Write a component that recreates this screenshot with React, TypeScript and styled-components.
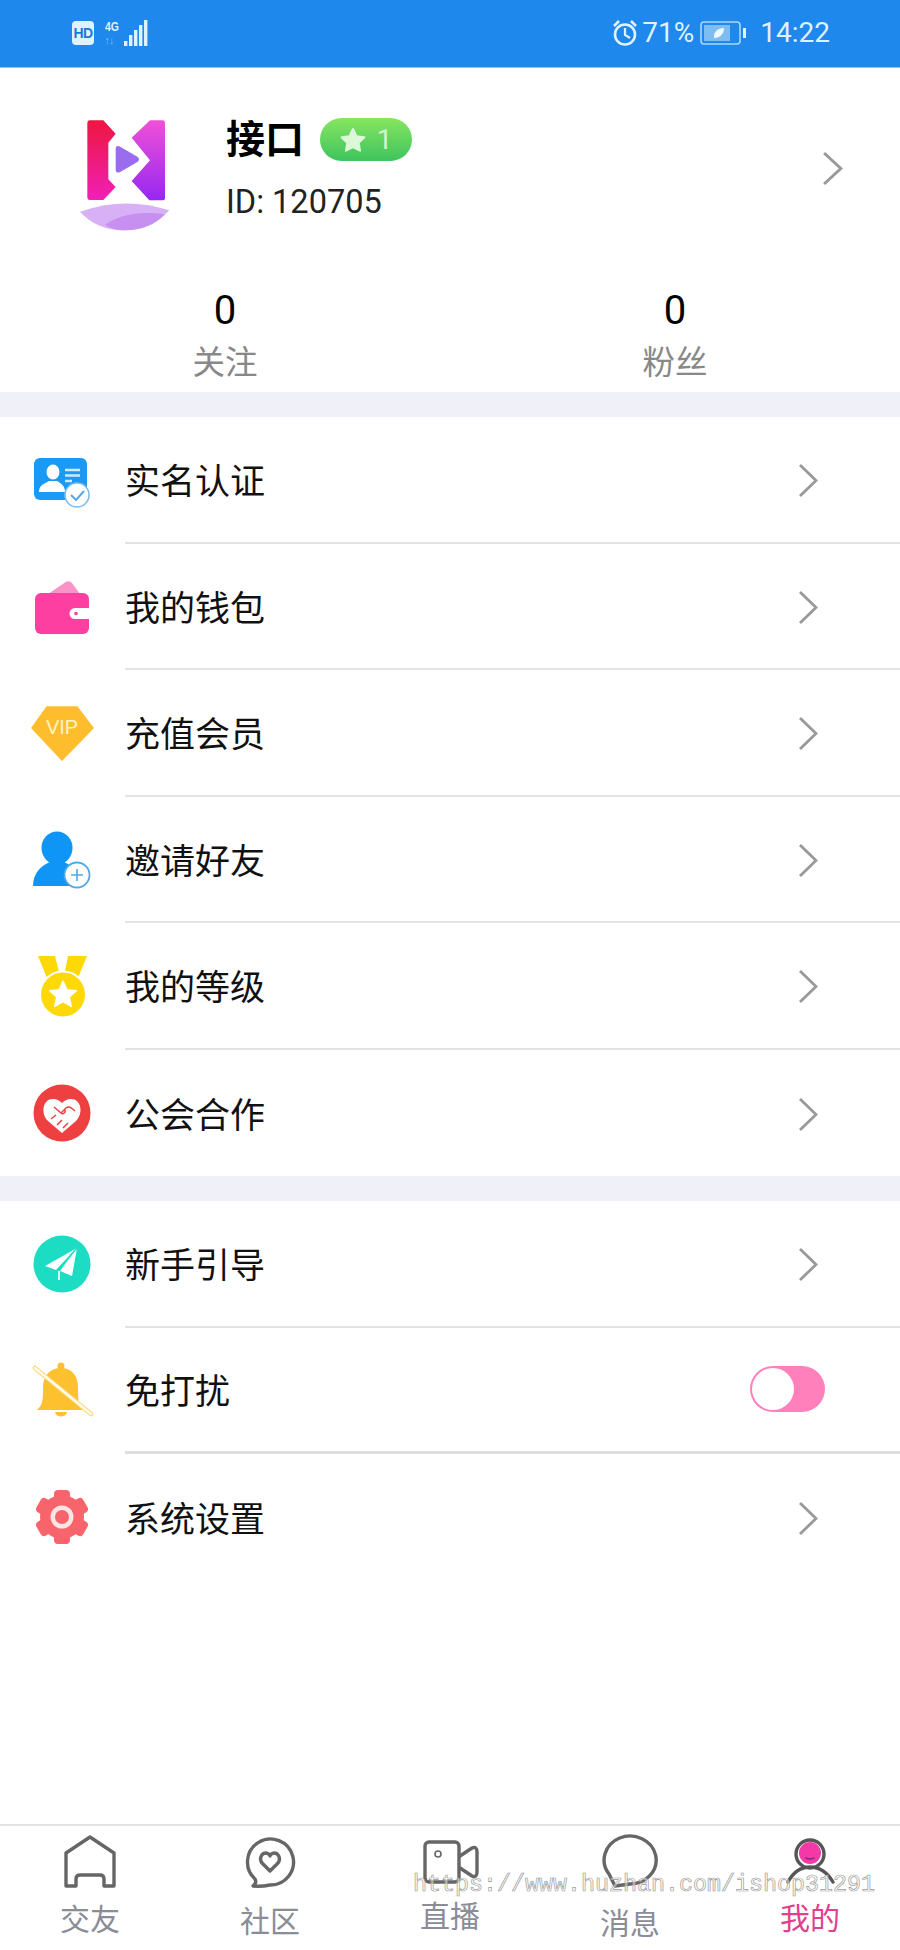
import React from "react";
import styled, { createGlobalStyle } from "styled-components";

const CJK = `Roboto, "Noto Sans CJK SC", "Noto Sans", sans-serif`;

const Global = createGlobalStyle`
  html, body { margin: 0; padding: 0; background: #fff; }
  * { box-sizing: border-box; }
`;

const Page = styled.div`
  position: relative;
  width: 900px;
  min-height: 1950px;
  display: flex;
  flex-direction: column;
  background: #fff;
  font-family: ${CJK};
`;

/* status bar */
const StatusBar = styled.header`
  height: 68px;
  padding: 0 70px 2px 72px;
  background: #1e88ed;
  border-bottom: 1px solid #8cc6f6;
  display: flex;
  align-items: center;
  justify-content: space-between;
  color: #dff2ff;
`;
const StatusGroup = styled.div`
  display: flex;
  align-items: center;
`;
const HdBadge = styled.span`
  width: 22px;
  height: 24px;
  border-radius: 4px;
  background: #dff2ff;
  color: #1e78d8;
  font: 700 14px/24px "Liberation Sans", sans-serif;
  letter-spacing: -0.5px;
  text-align: center;
`;
const NetStack = styled.div`
  margin-left: 11px;
  width: 16px;
  display: flex;
  flex-direction: column;
  gap: 2px;
`;
const NetLabel = styled.span`
  font: 700 13px/12px "Liberation Sans", sans-serif;
  transform: scaleX(0.8);
  transform-origin: left;
`;
const NetArrows = styled.span`
  font: 700 11px/10px "Liberation Sans", sans-serif;
  color: #8cc8f8;
  transform: scaleX(0.8);
  transform-origin: left;
`;
const StatusText = styled.span<{ $gap?: number }>`
  font-size: 28px;
  line-height: 32px;
  margin-left: ${(p) => p.$gap ?? 0}px;
`;
const Battery = styled.svg`
  margin-left: 6px;
`;
const SignalBars = styled.svg`
  margin-left: 3px;
`;

/* profile */
const Profile = styled.section`
  height: 213px;
  padding: 0 57px 0 79px;
  display: flex;
  align-items: center;
`;
const ProfileInfo = styled.div`
  margin: 0 0 11px 55px;
  flex: 1;
  display: flex;
  flex-direction: column;
  gap: 20px;
`;
const NameRow = styled.div`
  display: flex;
  align-items: center;
  gap: 16px;
`;
const Name = styled.span`
  font-size: 39px;
  line-height: 46px;
  font-weight: 700;
  color: #000;
`;
const LevelBadge = styled.span`
  width: 92px;
  height: 43px;
  border-radius: 22px;
  background: linear-gradient(to bottom, #86e660, #3ec45e);
  display: flex;
  align-items: center;
  justify-content: center;
  gap: 11px;
  color: #d4f6cc;
  font-size: 28px;
`;
const UserId = styled.span`
  font-size: 32.5px;
  line-height: 39px;
  color: #222;
`;
const ProfileChevron = styled.span`
  display: flex;
  margin-bottom: 13px;
`;

/* stats */
const Stats = styled.section`
  height: 111px;
  padding-top: 8px;
  display: grid;
  grid-template-columns: 1fr 1fr;
`;
const Stat = styled.div`
  display: flex;
  flex-direction: column;
  align-items: center;
  gap: 10px;
`;
const StatValue = styled.span`
  font-size: 40px;
  line-height: 44px;
  color: #000;
`;
const StatLabel = styled.span`
  font-size: 32.5px;
  line-height: 40px;
  color: #888;
`;

/* menu */
const Band = styled.div`
  height: 25px;
  background: #f0f0f8;
`;
const Row = styled.div`
  height: 126.5px;
  display: flex;
`;
const IconSlot = styled.span`
  width: 125px;
  padding-left: 30px;
  display: flex;
  align-items: center;
  flex: none;
`;
const RowBody = styled.div<{ $last?: boolean; $thick?: boolean }>`
  flex: 1;
  padding-right: 82px;
  display: flex;
  align-items: center;
  justify-content: space-between;
  border-bottom: ${(p) =>
    p.$last ? "none" : `${p.$thick ? 3 : 2}px solid ${p.$thick ? "#dedede" : "#e4e4e4"}`};
`;
const RowLabel = styled.span`
  margin-top: 8px;
  font-size: 35px;
  line-height: 44px;
  color: #111;
`;
const RowChevron = styled.span`
  margin-top: 3px;
  display: flex;
`;
const Switch = styled.span`
  width: 75px;
  height: 46px;
  margin-right: -7px;
  padding: 2px;
  border-radius: 23px;
  background: #ff80bb;
  display: flex;
`;
const SwitchThumb = styled.span`
  width: 42px;
  height: 42px;
  border-radius: 50%;
  background: #fff;
`;
const Spacer = styled.div`
  flex: 1;
`;

/* bottom nav */
const Nav = styled.nav`
  position: relative;
  height: 126px;
  padding-top: 6px;
  border-top: 2px solid #e4e4e4;
  display: grid;
  grid-template-columns: repeat(5, 180px);
`;
const NavItem = styled.div`
  display: flex;
  flex-direction: column;
  align-items: center;
`;
const NavLabel = styled.span<{ $active?: boolean; $offset: number }>`
  margin-top: ${(p) => p.$offset}px;
  font-size: 30px;
  line-height: 36px;
  color: ${(p) => (p.$active ? "#e0408c" : "#8a8c96")};
`;
const Watermark = styled.span`
  position: absolute;
  left: 413px;
  top: 46px;
  font: 400 23.33px/26px "Liberation Mono", monospace;
  color: rgba(255, 255, 255, 0.55);
  -webkit-text-stroke: 0.7px #9c9c9c;
  white-space: nowrap;
`;

const Chevron = ({ w = 20, h = 35 }: { w?: number; h?: number }) => (
  <svg width={w} height={h} viewBox="0 0 20 35" fill="none" preserveAspectRatio="none">
    <path d="M2 2 L18 17.5 L2 33" stroke="#999" strokeWidth="2.8" />
  </svg>
);

const Icon = ({ children }: { children: React.ReactNode }) => (
  <svg width="64" height="64" viewBox="0 0 64 64">
    {children}
  </svg>
);

const star = (cx: number, cy: number, R: number, r: number) =>
  Array.from({ length: 10 }, (_, i) => {
    const a = -Math.PI / 2 + (i * Math.PI) / 5;
    const d = i % 2 ? r : R;
    return `${(cx + d * Math.cos(a)).toFixed(2)},${(cy + d * Math.sin(a)).toFixed(2)}`;
  }).join(" ");

const CardIcon = () => (
  <Icon>
    <rect x="4" y="10" width="53" height="42" rx="6" fill="#1a9af5" />
    <ellipse cx="23" cy="24" rx="6.5" ry="7.5" fill="#fff" />
    <path d="M9 44 C9 37 14 36 19 33 L27 33 C32 36 35 38 35 44 Z" fill="#fff" />
    <path d="M35 22 H50 M35 27.5 H50 M35 33 H42" stroke="#cfeaff" strokeWidth="2.4" />
    <circle cx="47" cy="47" r="12" fill="#fff" stroke="#7dbdec" strokeWidth="1.6" />
    <path d="M41 47 L46 52 L54 43" fill="none" stroke="#5aa8e4" strokeWidth="2" />
  </Icon>
);
const WalletIcon = () => (
  <Icon>
    <path d="M18 19 L35 7.5 Q39 5 42 8 L50 19 Z" fill="#fb94c6" />
    <rect x="5" y="18" width="54" height="41" rx="6" fill="#fd3fa2" />
    <path d="M60 33 H45 A5.5 5.5 0 0 0 45 44 H60 Z" fill="#fff" />
    <circle cx="46" cy="38.5" r="1.8" fill="#fd3fa2" />
  </Icon>
);
const VipIcon = () => (
  <Icon>
    <path d="M17 6 H47 L63 27 L32 59 L2 27 Z" fill="#fdbd2c" stroke="#fdbd2c" strokeWidth="1.5" strokeLinejoin="round" />
    <text x="32" y="33" textAnchor="middle" fontFamily="Liberation Sans" fontSize="20" fill="#fff3c4">VIP</text>
  </Icon>
);
const InviteIcon = () => (
  <Icon>
    <ellipse cx="27" cy="20" rx="15.5" ry="16.5" fill="#0f95f5" />
    <path d="M3 58 C3 46 10 38 20 34 L34 34 C44 38 50 46 50 58 Z" fill="#0f95f5" />
    <circle cx="47" cy="47" r="12.5" fill="#fff" stroke="#4ea9e8" strokeWidth="1.8" />
    <path d="M41 47 H53 M47 41 V53" stroke="#4ea9e8" strokeWidth="1.6" />
  </Icon>
);
const MedalIcon = () => (
  <Icon>
    <polygon points="8,2 25,2 30,22 17,24" fill="#ffd808" />
    <polygon points="57,2 38,2 34,22 48,24" fill="#ffd808" />
    <circle cx="33" cy="40.5" r="23" fill="#ffd808" stroke="#fff" strokeWidth="2" />
    <polygon points={star(33, 41, 14, 6.5)} fill="#fff" stroke="#fff" strokeWidth="1.5" strokeLinejoin="round" />
  </Icon>
);
const HandshakeIcon = () => (
  <Icon>
    <circle cx="32" cy="32" r="28.5" fill="#ee4040" />
    <path d="M32 52 L18 40 C10 32 13 18 23 18 C27 18 30 20 32 22 C34 20 37 18 41 18 C51 18 54 32 46 40 Z" fill="#fff" />
    <path d="M24 26 L31 32 L36 27 C38 25 41 26 45 30 M31 32 C33 34 36 31 35 29 M27 44 L32 39 M33 47 L38 42 M21 38 L26 34" fill="none" stroke="#ee4040" strokeWidth="1.5" />
  </Icon>
);
const PlaneIcon = () => (
  <Icon>
    <circle cx="32" cy="32" r="28.5" fill="#1ddcc4" />
    <polygon points="47,16 15,34 26,38" fill="#fff" />
    <polygon points="47,16 30,39 42,44" fill="#fff" />
    <path d="M29 39 V48" stroke="#d8faf4" strokeWidth="2" />
    <path d="M47 16 L27 38.5" stroke="#1ddcc4" strokeWidth="1.4" />
  </Icon>
);
const BellIcon = () => (
  <Icon>
    <circle cx="31" cy="7" r="3.5" fill="#fdc02f" />
    <path d="M7 51 C13 46 13 40 13 28 C13 16 21 9 31 9 C41 9 48 16 48 28 C48 40 48 46 53 51 Z" fill="#fdc02f" />
    <path d="M25 53 H37 C36 59 26 59 25 53 Z" fill="#fdc02f" />
    <path d="M5 9 L61 55" stroke="#fbd871" strokeWidth="4.5" strokeLinecap="round" />
    <path d="M5 9 L61 55" stroke="#fffbee" strokeWidth="2.4" strokeLinecap="round" />
  </Icon>
);
const GearIcon = () => (
  <Icon>
    <circle cx="32" cy="32" r="22" fill="#f8646c" />
    {[0, 60, 120, 180, 240, 300].map((a) => (
      <rect key={a} x="24" y="5" width="16" height="14" rx="4" fill="#f8646c" transform={`rotate(${a} 32 32)`} />
    ))}
    <circle cx="32" cy="32" r="11.5" fill="#fbe4e4" />
    <circle cx="32" cy="32" r="7" fill="#f8646c" />
  </Icon>
);

const NavSvg = ({ children }: { children: React.ReactNode }) => (
  <svg width="60" height="60" viewBox="0 0 60 60" fill="none" stroke="#666" strokeWidth="3.4" strokeLinejoin="round" strokeLinecap="round">
    {children}
  </svg>
);

const NavItems = [
  {
    label: "交友", offset: 10,
    icon: <path d="M6 21 L30 5 L54 21 V54 H44 V47 Q44 43 40 43 H20 Q16 43 16 47 V54 H6 Z" />,
  },
  {
    label: "社区", offset: 12,
    icon: (
      <>
        <path d="M13 54 C16 52 16 49 15 47 A23 23 0 1 1 30 53 C25 54 19 54.5 13 54 Z" />
        <path d="M30 39 L22.5 31.5 C18 26.5 22 21 26 21 C28 21 30 23 30 24 C30 23 32 21 34 21 C38 21 42 26.5 37.5 31.5 Z" />
      </>
    ),
  },
  {
    label: "直播", offset: 7,
    icon: (
      <>
        <rect x="5" y="10" width="34" height="40" rx="4" />
        <path d="M40 24 L52 16 Q57 14 57 20 V40 Q57 46 52 44 L40 36" />
        <circle cx="18" cy="22" r="3" strokeWidth="1.6" />
      </>
    ),
  },
  {
    label: "消息", offset: 14,
    icon: <path d="M9 42 L15 54 L30 52 A26 24 0 1 0 9 42 Z" />,
  },
  {
    label: "我的", offset: 9, active: true,
    icon: (
      <>
        <circle cx="30" cy="22" r="14" fill="#fff" stroke="#555" />
        <circle cx="30" cy="21" r="11" fill="#f538a8" stroke="none" />
        <path d="M26 26 Q30 28 34 26" stroke="#8a2a70" strokeWidth="1.5" />
        <path d="M8 50 Q16 35 30 35 Q44 35 53 50" stroke="#555" />
      </>
    ),
  },
];

const First = [
  { label: "实名认证", icon: <CardIcon /> },
  { label: "我的钱包", icon: <WalletIcon /> },
  { label: "充值会员", icon: <VipIcon /> },
  { label: "邀请好友", icon: <InviteIcon /> },
  { label: "我的等级", icon: <MedalIcon /> },
  { label: "公会合作", icon: <HandshakeIcon /> },
];

export default function App() {
  return (
    <Page>
      <Global />
      <StatusBar>
        <StatusGroup>
          <HdBadge>HD</HdBadge>
          <NetStack>
            <NetLabel>4G</NetLabel>
            <NetArrows>↑↓</NetArrows>
          </NetStack>
          <SignalBars width="24" height="26" viewBox="0 0 24 26" fill="#dff2ff">
            <rect x="0" y="21" width="3.4" height="5" />
            <rect x="5" y="15" width="3.4" height="11" />
            <rect x="10" y="10" width="3.4" height="16" />
            <rect x="15" y="5" width="3.4" height="21" />
            <rect x="20" y="0" width="3.4" height="26" />
          </SignalBars>
        </StatusGroup>
        <StatusGroup>
          <svg width="26" height="28" viewBox="0 0 26 28" fill="none" stroke="#dff2ff" strokeWidth="2.6">
            <circle cx="13" cy="15.5" r="10" />
            <path d="M13 9 V16 L18 19" strokeWidth="2.2" />
            <path d="M2 7 L7 2 M24 7 L19 2" strokeWidth="2.6" />
          </svg>
          <StatusText $gap={4}>71%</StatusText>
          <Battery width="47" height="24" viewBox="0 0 47 24" fill="none">
            <rect x="1" y="1" width="39" height="22" rx="3" stroke="#a8d8fb" strokeWidth="1.6" />
            <rect x="4" y="4" width="26" height="16" fill="#7cbdf4" />
            <path d="M14 17 C13 11 18 7 24 7 C24 13 20 17 14 17 Z" fill="#eef8ff" />
            <rect x="43" y="7" width="3" height="10" fill="#dff2ff" />
          </Battery>
          <StatusText $gap={13}>14:22</StatusText>
        </StatusGroup>
      </StatusBar>

      <Profile>
        <svg width="92" height="112" viewBox="87 54 276 336">
          <defs>
            <linearGradient id="lgL" x1="0" y1="0" x2="0" y2="1">
              <stop offset="0" stopColor="#ee1640" />
              <stop offset="1" stopColor="#f020b8" />
            </linearGradient>
            <linearGradient id="lgR" x1="0" y1="0" x2="0" y2="1">
              <stop offset="0" stopColor="#f050d8" />
              <stop offset="1" stopColor="#9628f2" />
            </linearGradient>
          </defs>
          <path d="M120 58 H160 L197 98 L175 125 V235 L197 258 L160 297 H120 Q112 297 112 288 V67 Q112 58 120 58 Z" fill="url(#lgL)" />
          <path d="M337 58 H300 L245 110 L300 178 L245 240 L298 298 H337 Q345 298 345 290 V67 Q345 58 337 58 Z" fill="url(#lgR)" />
          <path d="M197 145 Q197 130 212 138 L262 167 Q272 175 262 183 L212 212 Q197 220 197 205 Z" fill="#9a6cf0" />
          <path d="M90 332 Q225 285 358 328 Q300 388 225 388 Q140 388 90 332 Z" fill="#d8b0f6" />
          <path d="M165 372 Q230 325 345 340 Q300 388 225 388 Q190 388 165 372 Z" fill="#c68ff0" />
        </svg>
        <ProfileInfo>
          <NameRow>
            <Name>接口</Name>
            <LevelBadge>
              <svg width="26" height="26" viewBox="0 0 26 26">
                <polygon points={star(13, 14, 12, 6)} fill="#dcf8d8" stroke="#dcf8d8" strokeWidth="2" strokeLinejoin="round" />
              </svg>
              1
            </LevelBadge>
          </NameRow>
          <UserId>ID: 120705</UserId>
        </ProfileInfo>
        <ProfileChevron>
          <Chevron w={21} h={35} />
        </ProfileChevron>
      </Profile>

      <Stats>
        <Stat>
          <StatValue>0</StatValue>
          <StatLabel>关注</StatLabel>
        </Stat>
        <Stat>
          <StatValue>0</StatValue>
          <StatLabel>粉丝</StatLabel>
        </Stat>
      </Stats>

      <Band />
      {First.map((r, i) => (
        <Row key={r.label}>
          <IconSlot>{r.icon}</IconSlot>
          <RowBody $last={i === First.length - 1}>
            <RowLabel>{r.label}</RowLabel>
            <RowChevron><Chevron /></RowChevron>
          </RowBody>
        </Row>
      ))}
      <Band />
      <Row>
        <IconSlot><PlaneIcon /></IconSlot>
        <RowBody>
          <RowLabel>新手引导</RowLabel>
          <RowChevron><Chevron /></RowChevron>
        </RowBody>
      </Row>
      <Row>
        <IconSlot><BellIcon /></IconSlot>
        <RowBody $thick>
          <RowLabel>免打扰</RowLabel>
          <Switch><SwitchThumb /></Switch>
        </RowBody>
      </Row>
      <Row>
        <IconSlot><GearIcon /></IconSlot>
        <RowBody $last>
          <RowLabel>系统设置</RowLabel>
          <RowChevron><Chevron /></RowChevron>
        </RowBody>
      </Row>
      <Spacer />
      <Nav>
        {NavItems.map((n) => (
          <NavItem key={n.label}>
            <NavSvg>{n.icon}</NavSvg>
            <NavLabel $active={n.active} $offset={n.offset}>{n.label}</NavLabel>
          </NavItem>
        ))}
        <Watermark>https://www.huzhan.com/ishop31291</Watermark>
      </Nav>
    </Page>
  );
}
